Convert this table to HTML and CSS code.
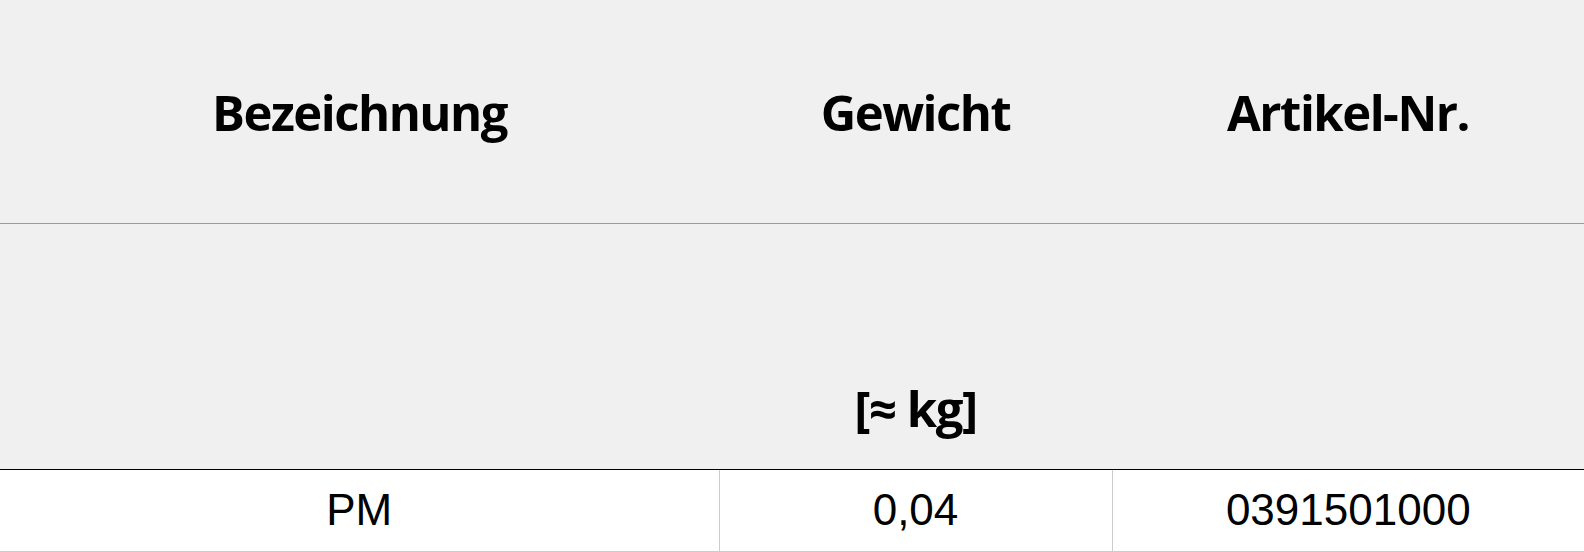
FILE: index.html
```html
<!DOCTYPE html>
<html lang="de">
<head>
<meta charset="utf-8">
<title>Tabelle</title>
<link rel="stylesheet" href="styles.css">
</head>
<body>
<table class="spec">
  <colgroup>
    <col class="c1">
    <col class="c2">
    <col class="c3">
  </colgroup>
  <thead>
    <tr class="h1">
      <th>Bezeichnung</th>
      <th>Gewicht</th>
      <th>Artikel-Nr.</th>
    </tr>
    <tr class="h2">
      <th></th>
      <th>[≈ kg]</th>
      <th></th>
    </tr>
  </thead>
  <tbody>
    <tr class="row">
      <td>PM</td>
      <td>0,04</td>
      <td>0391501000</td>
    </tr>
  </tbody>
</table>
</body>
</html>
```
FILE: styles.css
```css
html, body {
  margin: 0;
  padding: 0;
  background: #ffffff;
}

.spec {
  width: 1584px;
  border-collapse: collapse;
  border-spacing: 0;
  table-layout: fixed;
}

.c1 { width: 719px; }
.c2 { width: 393px; }
.c3 { width: 472px; }

.spec th {
  background: #f0f0f0;
  color: #000;
  font-family: "Open Sans", "Noto Sans", "DejaVu Sans", sans-serif;
  font-weight: 700;
  font-size: 49px;
  letter-spacing: -1.5px;
  text-align: center;
  padding: 0;
  line-height: 1;
}

.h1 th {
  height: 223px;
  padding-top: 3px;
  box-sizing: border-box;
  vertical-align: middle;
  border-bottom: 1px solid #9a9a9a;
}

.h2 th {
  height: 246px;
  vertical-align: bottom;
  padding-bottom: 36px;
  box-sizing: border-box;
  border-bottom: 1px solid #000;
}

.row td {
  height: 81px;
  padding: 0;
  text-align: center;
  vertical-align: middle;
  font-family: "Liberation Sans", Arial, sans-serif;
  font-size: 44px;
  color: #000;
  border-bottom: 1px solid #cccccc;
  border-left: 1px solid #cccccc;
}

.row td:first-child {
  border-left: none;
}
```
